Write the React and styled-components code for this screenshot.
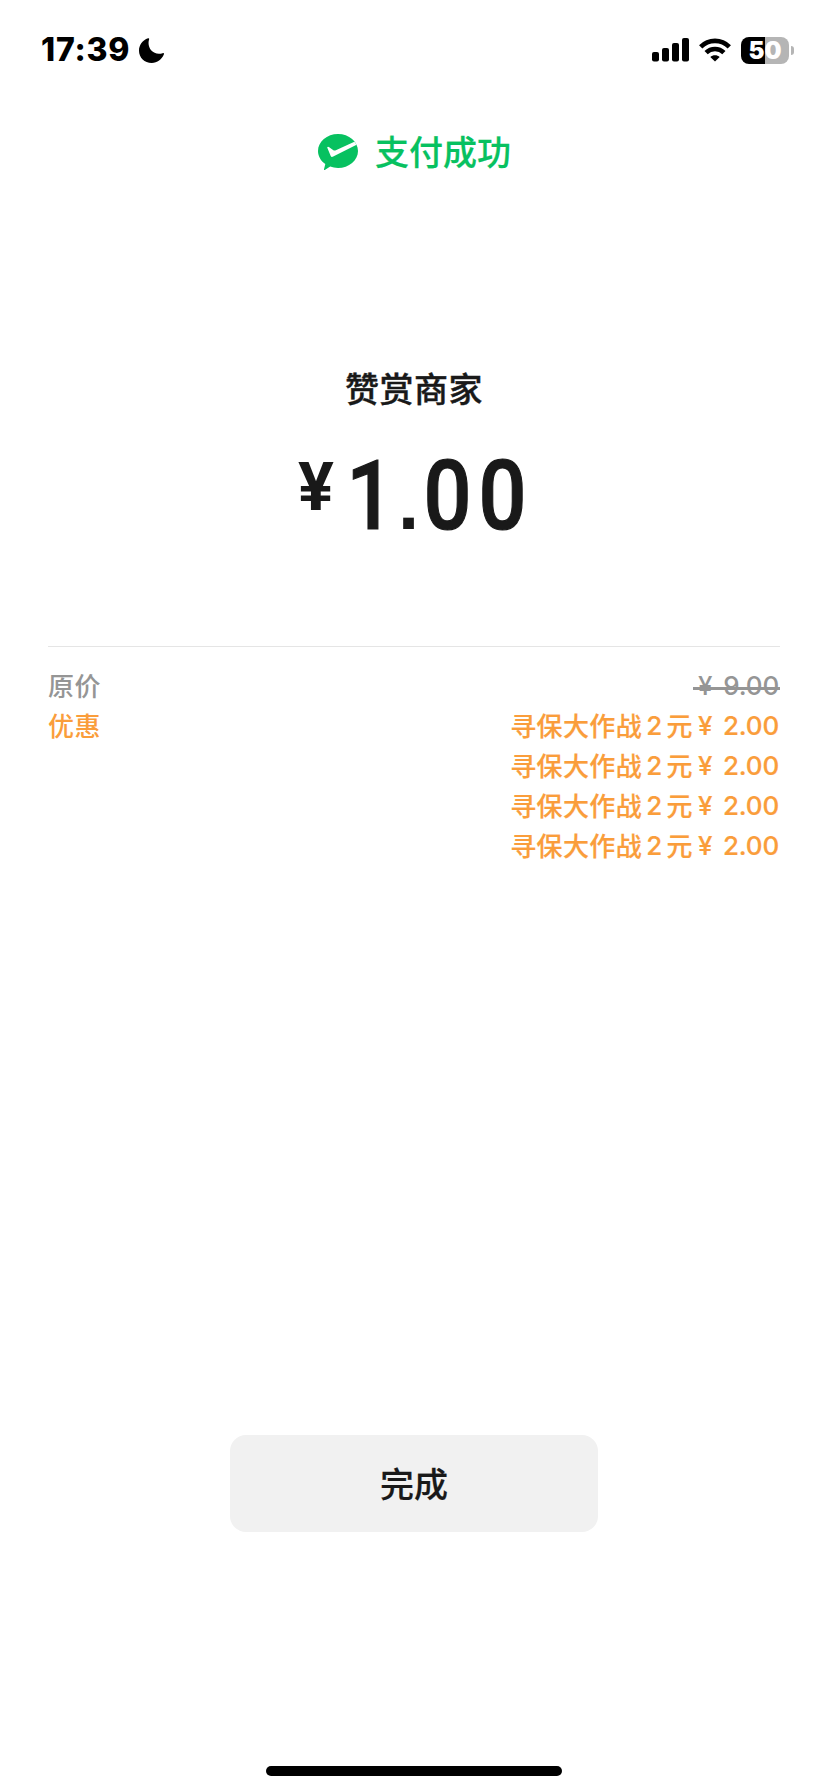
import React from 'react';
import styled, { createGlobalStyle } from 'styled-components';

const GlobalStyle = createGlobalStyle`
	* {
		box-sizing: border-box;
	}
	body {
		margin: 0;
		background: #fff;
		font-family: Inter, 'Noto Sans CJK SC', sans-serif;
	}
`;

const Screen = styled.div`
	width: 828px;
	height: 1792px;
	display: flex;
	flex-direction: column;
	overflow: hidden;
	background: #fff;
	color: #191919;
`;

const StatusBar = styled.header`
	height: 100px;
	display: flex;
	justify-content: space-between;
	padding: 30px 34px 0 41px;
	color: #000;
`;

const StatusGroup = styled.div`
	height: 40px;
	display: flex;
	align-items: center;
	gap: ${({ $gap }) => $gap}px;
`;

const Time = styled.span`
	width: 88px;
	font-size: 32px;
	font-weight: 800;
	line-height: 40px;
	letter-spacing: 0.8px;
	white-space: nowrap;
`;

const Battery = styled.div`
	display: flex;
	align-items: center;
	gap: 2px;
`;

const BatteryBody = styled.div`
	width: 48px;
	height: 27px;
	border-radius: 8px;
	background: linear-gradient(to right, #000 50%, #b5b5b5 50%);
	color: #fff;
	font-size: 24px;
	font-weight: 900;
	line-height: 27px;
	text-align: center;
`;

const BatteryTip = styled.div`
	width: 3px;
	height: 9px;
	border-radius: 0 3px 3px 0;
	background: #b5b5b5;
`;

const Result = styled.div`
	height: 104px;
	display: flex;
	align-items: center;
	justify-content: center;
	gap: 17px;
	color: #07c160;
	padding-left: 1px;
`;

const Label = styled.span`
	font-size: 34px;
	font-weight: 500;
	line-height: 48px;
	padding-top: 2px;
	letter-spacing: ${({ $spacing = 0 }) => $spacing}px;
	-webkit-text-stroke: ${({ $stroke = 0.2 }) => $stroke}px currentColor;
`;

const Payment = styled.section`
	height: 442px;
	padding-top: 160px;
	display: flex;
	flex-direction: column;
	align-items: center;
`;

const Amount = styled.div`
	display: flex;
	align-items: flex-start;
	margin-top: 21px;
	font-family: Roboto, sans-serif;
	font-weight: 500;
`;

const Currency = styled.span`
	width: 45px;
	font-size: 67px;
	font-weight: 700;
	line-height: 105px;
`;

const Digit = styled.span`
	width: ${({ $width = 55 }) => $width}px;
	font-size: 96px;
	line-height: 122px;
	text-align: center;
	transform: scaleX(0.88);
	-webkit-text-stroke: 1.2px currentColor;
`;

const Point = styled.span`
	width: 23px;
	font-family: 'Liberation Sans', sans-serif;
	font-size: 76px;
	font-weight: 700;
	line-height: 135px;
	text-align: center;
`;

const Details = styled.section`
	height: 789px;
	margin: 0 48px;
	padding-top: 20px;
	border-top: 1px solid #e5e5e5;
`;

const Row = styled.div`
	display: flex;
	justify-content: space-between;
	color: ${({ $color }) => $color};
	font-size: 26px;
	font-weight: 500;
	line-height: 40px;
	letter-spacing: 0.4px;
`;

const Discounts = styled.div`
	display: flex;
	flex-direction: column;
	align-items: flex-end;
`;

const Discount = styled.div`
	display: flex;
	height: 40px;
	-webkit-text-stroke: 0.2px currentColor;
`;

const Count = styled.span`
	margin: 0 4px;
	line-height: 38px;
`;

const Price = styled.span`
	position: relative;
	width: 87px;
	height: 40px;
	display: flex;
	justify-content: space-between;
	padding: 0 1px 0 5px;
	line-height: 38px;
	letter-spacing: -0.2px;
`;

const OldPrice = styled(Price)`
	&::after {
		content: '';
		position: absolute;
		left: 0;
		right: 0;
		top: 20px;
		height: 3px;
		background: #959595;
	}
`;

const DoneButton = styled.button`
	width: 368px;
	height: 97px;
	flex: none;
	align-self: center;
	padding: 2px 0 0;
	border: 0;
	border-radius: 16px;
	background: #f1f1f1;
	color: #191919;
	font-family: inherit;
`;

const HomeIndicator = styled.div`
	width: 296px;
	height: 10px;
	flex: none;
	margin: auto auto 16px;
	border-radius: 5px;
	background: #000;
`;

const MoonIcon = () => (
	<svg width="25" height="25" viewBox="0 0 24 24">
		<path
			d="M8.7 0.3C9.5 0 10 0.5 9.7 1.3C7.2 9.4 13.4 17.2 22.7 14.6C23.7 14.3 24.3 14.8 23.9 15.7C21.9 20.8 17.6 24 12.2 24C5.4 24 0 18.8 0 12.2C0 6.9 3.4 2.1 8.7 0.3Z"
			fill="currentColor"
		/>
	</svg>
);

const SignalIcon = () => (
	<svg width="37" height="24" viewBox="0 0 37 24" fill="currentColor">
		<rect x="0" y="14" width="7" height="9.5" rx="2" />
		<rect x="10" y="10" width="7" height="13.5" rx="2" />
		<rect x="20" y="5" width="7" height="18.5" rx="2" />
		<rect x="30" y="0" width="7" height="23.5" rx="2" />
	</svg>
);

const WifiIcon = () => (
	<svg width="32" height="24" viewBox="0 0 32 24" fill="none" stroke="currentColor" strokeWidth="4.6">
		<path d="M1.7 8.9C9.6 0.8 22.4 0.8 30.3 8.9" />
		<path d="M7.1 14.6C12 9.8 20 9.8 24.9 14.6" />
		<path d="M16 23.6L11.3 18.9C13.8 16.6 18.2 16.6 20.7 18.9Z" fill="currentColor" stroke="none" />
	</svg>
);

const PayIcon = () => (
	<svg width="40" height="36" viewBox="0 0 40 36">
		<path
			d="M20 0C31 0 40 7.6 40 17C40 26.4 31 34 20 34C17.2 34 14.5 33.5 12.2 32.6L6.8 35.9C6.2 36.2 5.8 35.9 6 35.3L7.3 30C2.8 26.9 0 22.2 0 17C0 7.6 9 0 20 0Z"
			fill="currentColor"
		/>
		<path
			d="M9.2 13.6C9.5 12.6 10.3 12.6 11.2 13.3L15.4 16.3C16 16.7 16.6 16.7 17.3 16.4L36.4 7.8L38.6 10.7L15.2 22.6C13.9 23.3 13.2 23 12.7 21.9Z"
			fill="#fff"
		/>
	</svg>
);

const discounts = [1, 2, 3, 4];

const App = () => (
	<Screen>
		<GlobalStyle />
		<StatusBar>
			<StatusGroup $gap={10}>
				<Time>17:39</Time>
				<MoonIcon />
			</StatusGroup>
			<StatusGroup $gap={10}>
				<SignalIcon />
				<WifiIcon />
				<Battery>
					<BatteryBody>50</BatteryBody>
					<BatteryTip />
				</Battery>
			</StatusGroup>
		</StatusBar>
		<Result>
			<PayIcon />
			<Label>支付成功</Label>
		</Result>
		<Payment>
			<Label $spacing={0.5} $stroke={0.4}>
				赞赏商家
			</Label>
			<Amount>
				<Currency>¥</Currency>
				<Digit $width={54}>1</Digit>
				<Point>.</Point>
				<Digit>0</Digit>
				<Digit>0</Digit>
			</Amount>
		</Payment>
		<Details>
			<Row $color="#959595">
				<span>原价</span>
				<OldPrice>
					<span>¥</span>
					<span>9.00</span>
				</OldPrice>
			</Row>
			<Row $color="#fa9d3b">
				<span>优惠</span>
				<Discounts>
					{discounts.map((id) => (
						<Discount key={id}>
							<span>寻保大作战</span>
							<Count>2</Count>
							<span>元</span>
							<Price>
								<span>¥</span>
								<span>2.00</span>
							</Price>
						</Discount>
					))}
				</Discounts>
			</Row>
		</Details>
		<DoneButton>
			<Label>完成</Label>
		</DoneButton>
		<HomeIndicator />
	</Screen>
);

export default App;
